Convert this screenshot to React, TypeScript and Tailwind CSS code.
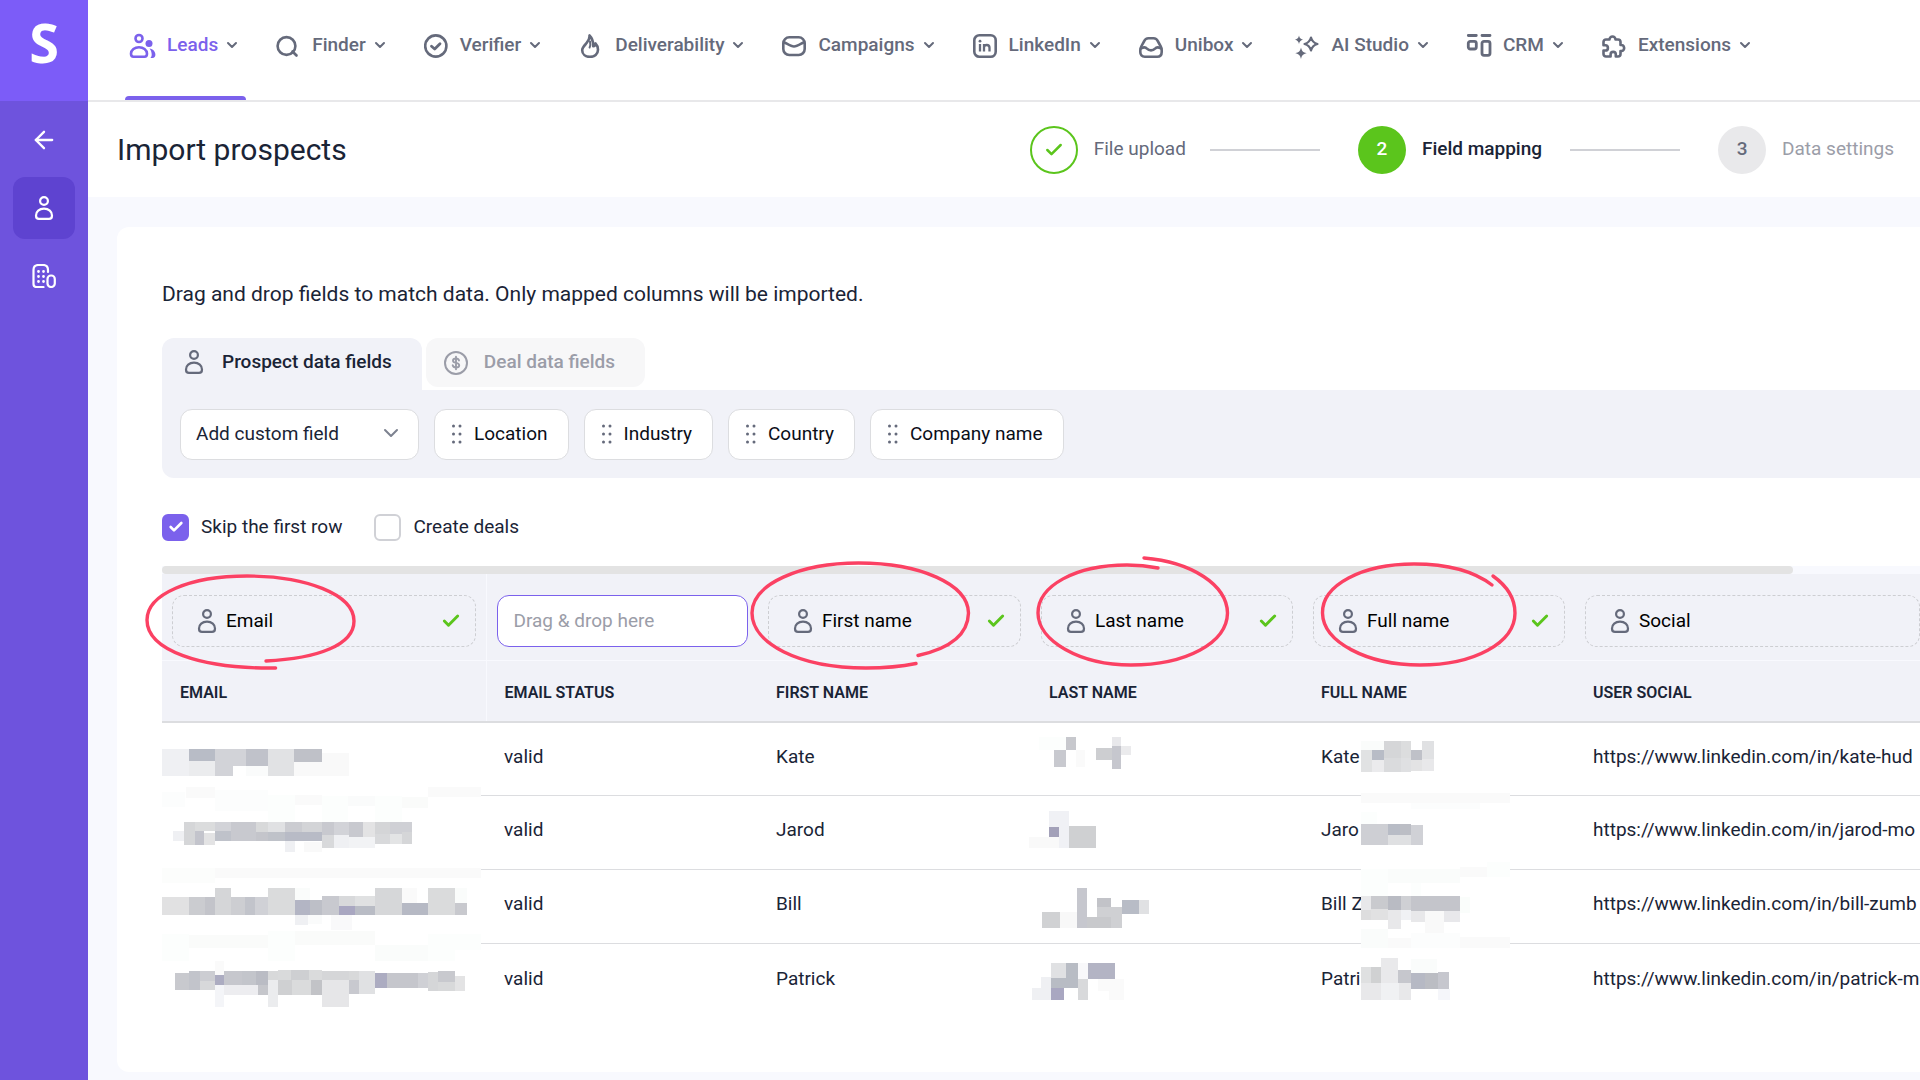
import React from "react";
import { ArrowLeft, Check, ChevronDown } from "lucide-react";

type IconProps = { className?: string };

const strokeProps = {
  fill: "none",
  stroke: "currentColor",
  strokeWidth: 2.6,
  strokeLinecap: "round" as const,
  strokeLinejoin: "round" as const,
};

function PersonIcon({ className = "size-6" }: IconProps) {
  return (
    <svg viewBox="0 0 24 24" className={className} {...strokeProps} strokeWidth={2.2}>
      <circle cx="12" cy="5" r="3.9" />
      <path d="M12 12.6c-4.8 0-8 3-8 6.8 0 2.2 1 3.500 3 3.500h10c2 0 3-1.300 3-3.500 0-3.800-3.200-6.800-8-6.800z" />
    </svg>
  );
}

function BuildingIcon({ className = "size-6" }: IconProps) {
  return (
    <svg viewBox="0 0 24 24" className={className} {...strokeProps} strokeWidth={2.2}>
      <path d="M11.500 23H4.500C2.500 23 1.500 22 1.500 20V6c0-3 2-5 5-5h4.500c3 0 5 2 5 5v2" />
      <rect x="15.500" y="11.500" width="7.300" height="11.500" rx="3.500" />
      <path d="M6.500 7.500h.01M11.500 7.500h.01M6.500 12.500h.01M11.500 12.500h.01M6.500 17.500h.01M11.500 17.500h.01" strokeWidth={2.800} />
    </svg>
  );
}

function LeadsIcon() {
  return (
    <svg viewBox="0 0 24 24" className="size-6 overflow-visible" {...strokeProps}>
      <circle cx="8" cy="4.500" r="3.500" />
      <path d="M8 13.200c-4.200 0-8 2.600-8 6.600C0 21.600.8 22.700 2.500 22.700h11c1.700 0 2.500-1.100 2.500-2.900 0-4-3.800-6.600-8-6.600z" />
      <circle cx="18" cy="9.500" r="3.500" fill="currentColor" stroke="none" />
      <path d="M18.500 14.500c3.400.5 5.900 3 5.900 6.300 0 1.900-1 3.200-3 3.200h-2c.9-.8 1.300-2 1.300-3.400 0-2.300-.8-4.400-2.200-6.100z" fill="currentColor" stroke="none" />
    </svg>
  );
}

function FinderIcon() {
  return (
    <svg viewBox="0 0 24 24" className="size-6" {...strokeProps}>
      <circle cx="10.500" cy="12" r="8.900" />
      <path d="M16.500 17.500l4 4" />
    </svg>
  );
}

function VerifierIcon() {
  return (
    <svg viewBox="0 0 24 24" className="size-6" {...strokeProps}>
      <circle cx="11.800" cy="12" r="10.600" />
      <path d="M7.500 12.200l3.200 2.800 5.300-5.300" strokeWidth={2.800} />
    </svg>
  );
}

function FlameIcon() {
  return (
    <svg viewBox="0 0 24 24" className="size-6" {...strokeProps}>
      <path d="M10.500 1.500c.3 3.500-1 5.500-3 7.700-2 2.200-4.300 4.300-4.300 7 0 4 3.300 6.700 7.800 6.700s8-2.900 8-7.200c0-2.800-1-4.700-2.500-6.200-.2 1.500-1 2.500-2.300 2.700.2-4.200-1-7.900-3.700-10.700z" />
      <path d="M11 7.500c.6 2.500.4 4.500-.4 6" strokeWidth={2} />
    </svg>
  );
}

function MailIcon() {
  return (
    <svg viewBox="0 0 24 24" className="size-6" {...strokeProps}>
      <rect x="1.300" y="3.300" width="21.400" height="17.700" rx="6" />
      <path d="M2.500 8.500c3 1.500 6.500 4 9.500 4s6.500-2.500 9.500-4" />
    </svg>
  );
}

function LinkedInIcon() {
  return (
    <svg viewBox="0 0 24 24" className="size-6" {...strokeProps}>
      <rect x="1.300" y="1.300" width="21.400" height="21.400" rx="5" />
      <path d="M7 10V17.500M11 17.500V10M11 13.500c0-1.700 1-2.500 2.800-2.500s2.700 1 2.700 2.700v3.800" strokeWidth={2.300} strokeLinecap="butt" />
      <circle cx="7" cy="7.200" r="1.400" fill="currentColor" stroke="none" />
    </svg>
  );
}

function InboxIcon() {
  return (
    <svg viewBox="0 0 24 24" className="size-6" {...strokeProps}>
      <path d="M5 7.500C6 5.200 7.500 4.300 9.500 4.300h5c2 0 3.500.9 4.500 3.200l2.500 4.500c.8 1.500 1.200 2.500 1.200 4v2c0 3-1.500 4.700-4.500 4.700H5.800c-3 0-4.500-1.700-4.500-4.700v-2c0-1.500.4-2.500 1.200-4z" />
      <path d="M2 14.500c2.500-1.500 4.500-1.700 6 .2 2 2.200 6 2.200 8 0 1.500-1.900 3.500-1.700 6-.2" />
    </svg>
  );
}

function SparklesIcon() {
  return (
    <svg viewBox="0 0 24 24" className="size-6 overflow-visible" fill="currentColor">
      <path d="M16 3.500c1 4 2.500 5.500 6.500 6.500-4 1-5.500 2.500-6.500 6.500-1-4-2.500-5.500-6.500-6.500 4-1 5.500-2.500 6.500-6.500z" fill="none" stroke="currentColor" strokeWidth="2.200" strokeLinejoin="round" />
      <path d="M4 1.500c.6 2.600 1.500 3.500 4 4.200C5.500 6.400 4.600 7.300 4 9.900 3.400 7.300 2.500 6.400 0 5.700 2.500 5 3.400 4.100 4 1.500z" />
      <path d="M6 13.500c.9 3.700 2 4.800 5.700 5.700C8 20.100 6.900 21.200 6 24.900 5.100 21.200 4 20.100.3 19.200 4 18.300 5.100 17.200 6 13.500z" />
    </svg>
  );
}

function CrmIcon() {
  return (
    <svg viewBox="0 0 24 24" className="size-6 overflow-visible" {...strokeProps} strokeWidth={2.800}>
      <path d="M1.300 1.500h8M15 1.500h8" />
      <rect x="1.300" y="7.300" width="8" height="7.700" rx="2" />
      <rect x="15" y="7.300" width="8" height="14" rx="2" />
    </svg>
  );
}

function PuzzleIcon() {
  return (
    <svg viewBox="0 0 24 24" className="size-6" {...strokeProps}>
      <path d="M7.500 5.500a3 3 0 0 1 6 0H16a2.500 2.500 0 0 1 2.500 2.500v3a3 3 0 0 1 1.200 6h-1.200v3a2.500 2.500 0 0 1-2.500 2.500h-2.200v-2a2.600 2.600 0 0 0-5.200 0v2H4A2.500 2.500 0 0 1 1.500 20v-3.500h1.800a2.600 2.600 0 0 0 0-5.200H1.500V8A2.500 2.500 0 0 1 4 5.500z" />
    </svg>
  );
}

function DollarIcon() {
  return (
    <svg viewBox="0 0 24 24" className="size-6" {...strokeProps} strokeWidth={2}>
      <circle cx="12" cy="12" r="11" />
      <path d="M15 9.500c-.3-1.300-1.400-2-3-2s-3 .8-3 2.200c0 3 6.200 1.400 6.200 4.500 0 1.500-1.300 2.300-3.200 2.300s-3-.8-3.300-2.200M12 5.800v12.400" strokeWidth={1.900} />
    </svg>
  );
}

function GripDots() {
  return (
    <svg viewBox="0 0 10 20" className="h-5 w-2.5" fill="#656a7b">
      <circle cx="1.500" cy="2" r="1.500" />
      <circle cx="8" cy="2" r="1.500" />
      <circle cx="1.500" cy="10" r="1.500" />
      <circle cx="8" cy="10" r="1.500" />
      <circle cx="1.500" cy="18" r="1.500" />
      <circle cx="8" cy="18" r="1.500" />
    </svg>
  );
}

const navItems = [
  { label: "Leads", Icon: LeadsIcon, active: true },
  { label: "Finder", Icon: FinderIcon },
  { label: "Verifier", Icon: VerifierIcon },
  { label: "Deliverability", Icon: FlameIcon },
  { label: "Campaigns", Icon: MailIcon },
  { label: "LinkedIn", Icon: LinkedInIcon },
  { label: "Unibox", Icon: InboxIcon },
  { label: "AI Studio", Icon: SparklesIcon, spaced: true },
  { label: "CRM", Icon: CrmIcon },
  { label: "Extensions", Icon: PuzzleIcon },
];

const chips = ["Location", "Industry", "Country", "Company name"];

const columns = [
  { title: "Email", field: "Email", mapped: true },
  { title: "Email status", field: null, mapped: false },
  { title: "First name", field: "First name", mapped: true },
  { title: "Last name", field: "Last name", mapped: true },
  { title: "Full name", field: "Full name", mapped: true },
  { title: "User social", field: "Social", mapped: false },
];

const rows = [
  { status: "valid", first: "Kate", full: "Kate", social: "https://www.linkedin.com/in/kate-hud" },
  { status: "valid", first: "Jarod", full: "Jaro", social: "https://www.linkedin.com/in/jarod-mo" },
  { status: "valid", first: "Bill", full: "Bill Z", social: "https://www.linkedin.com/in/bill-zumb" },
  { status: "valid", first: "Patrick", full: "Patri", social: "https://www.linkedin.com/in/patrick-m" },
];

// x, y, width, height, fill
type Block = [number, number, number, number, string];

const emailBlocks: Block[] = [
  [66, 117, 81, 81, "#eff0f3"], [147, 117, 78, 36, "#b8bcc6"], [147, 153, 78, 45, "#ebecee"],
  [225, 117, 93, 51, "#d2d3d8"], [225, 168, 54, 30, "#d2d3d8"], [318, 117, 66, 51, "#c0c2ca"],
  [318, 168, 66, 30, "#fafbfb"], [384, 117, 78, 81, "#e1e2e4"], [462, 117, 84, 39, "#bfc1c8"],
  [462, 156, 84, 42, "#f9f9f9"], [546, 129, 81, 69, "#f9f9f9"],
  [66, 247, 70, 44, "#fcfdfd"], [138, 231, 87, 33, "#fafafa"], [225, 240, 159, 64, "#fcfdfd"],
  [384, 256, 81, 80, "#fcfefd"], [465, 255, 81, 30, "#fafafa"], [546, 258, 78, 78, "#fcfefd"],
  [624, 258, 80, 30, "#fafbfb"], [705, 258, 81, 78, "#fcfefd"], [786, 260, 78, 33, "#fafbfa"],
  [864, 231, 159, 30, "#fafafa"],
  [99, 363, 33, 30, "#eff0f3"], [132, 336, 33, 69, "#d5d6d8"], [165, 336, 60, 27, "#dbdcdd"],
  [165, 363, 27, 42, "#c3c4cc"], [192, 369, 33, 36, "#e3e3e4"], [225, 336, 48, 27, "#d2d3d8"],
  [225, 363, 48, 30, "#bfc2ca"], [273, 336, 75, 57, "#c8c9cf"], [348, 336, 36, 30, "#d8d9da"],
  [348, 366, 36, 27, "#c4c5cb"], [384, 336, 51, 30, "#e0e1e3"], [384, 366, 51, 27, "#bfc2c9"],
  [435, 336, 51, 30, "#cbccd1"], [486, 336, 60, 30, "#d3d4d7"], [435, 366, 111, 27, "#b8bbc6"],
  [435, 393, 30, 33, "#eff0f3"], [491, 396, 55, 30, "#f9f9f9"], [546, 336, 36, 40, "#c8c9cf"],
  [546, 376, 36, 38, "#d8d9db"], [582, 336, 45, 39, "#d2d3d8"], [582, 375, 45, 39, "#eff0f3"],
  [627, 336, 42, 45, "#c8c9cf"], [669, 336, 36, 45, "#e3e3e4"], [627, 381, 78, 33, "#f2f3f5"],
  [705, 336, 45, 36, "#d4d5d7"], [705, 372, 45, 30, "#d8d9db"], [750, 336, 66, 36, "#cfd0d5"],
  [750, 372, 36, 30, "#e3e4e5"], [786, 366, 30, 36, "#d5d6d8"],
  [66, 474, 159, 46, "#fcfdfc"], [225, 474, 798, 29, "#fafafa"],
  [66, 561, 81, 54, "#e1e1e2"], [147, 561, 48, 54, "#cbccd0"], [195, 561, 30, 54, "#c3c4ca"],
  [225, 534, 48, 81, "#d5d6d8"], [273, 561, 42, 54, "#cdced2"], [315, 561, 30, 54, "#c2c4cb"],
  [345, 561, 39, 54, "#d0d1d6"], [384, 534, 81, 81, "#dadbdc"], [465, 534, 46, 36, "#fafcfb"],
  [465, 570, 45, 45, "#b3b5c4"], [510, 570, 36, 45, "#bdbfc7"], [465, 615, 39, 30, "#eff0f3"],
  [504, 615, 42, 28, "#fafbfb"], [546, 558, 51, 57, "#c8c9cf"], [597, 558, 48, 30, "#d8d9db"],
  [645, 558, 60, 30, "#e0e1e2"], [597, 588, 48, 27, "#a9a7c1"], [645, 588, 60, 27, "#b9bcc5"],
  [574, 615, 62, 46, "#f9f9fa"], [705, 534, 81, 81, "#d6d7d9"], [786, 534, 45, 45, "#fafafa"],
  [786, 579, 78, 36, "#b6b9c4"], [864, 534, 81, 81, "#dadbdc"], [945, 534, 36, 45, "#fafcfb"],
  [945, 579, 36, 36, "#c8c9ce"],
  [66, 672, 81, 80, "#fcfefd"], [147, 675, 237, 38, "#fafbfa"], [384, 664, 81, 88, "#fcfefd"],
  [465, 664, 240, 40, "#fafbfa"], [705, 704, 159, 48, "#fafcfb"], [864, 672, 81, 80, "#fcfefd"],
  [945, 672, 78, 48, "#fcfefd"],
  [105, 789, 42, 51, "#c8c9ce"], [147, 783, 33, 57, "#c2c4cb"], [180, 783, 45, 30, "#cccdd2"],
  [180, 813, 45, 27, "#d7d8da"], [225, 753, 27, 42, "#fafafa"], [225, 795, 27, 30, "#acacc1"],
  [225, 825, 27, 66, "#f4f5f8"], [252, 783, 54, 42, "#c6c7cd"], [306, 783, 42, 42, "#c3c5cb"],
  [348, 783, 36, 42, "#babcc4"], [252, 825, 102, 30, "#ededf0"], [354, 825, 30, 30, "#c5c6cb"],
  [384, 783, 30, 27, "#d8d9da"], [384, 810, 30, 81, "#ebecee"], [414, 780, 39, 30, "#d9dadb"],
  [453, 780, 54, 30, "#cecfd2"], [507, 780, 39, 30, "#dadbdc"], [414, 810, 42, 45, "#cfd0d2"],
  [456, 810, 57, 45, "#dadbdc"], [513, 810, 33, 45, "#c2c3c7"], [546, 783, 81, 27, "#d5d6d8"],
  [546, 810, 81, 81, "#e6e6e8"], [627, 783, 29, 27, "#d8d9da"], [627, 810, 51, 42, "#c8c9cf"],
  [656, 783, 49, 69, "#e0e1e3"], [705, 789, 36, 45, "#acacc1"], [741, 789, 93, 45, "#c5c6cc"],
  [834, 789, 30, 45, "#cfd0d5"], [864, 786, 30, 57, "#d5d6d8"], [894, 783, 51, 33, "#c8c9ce"],
  [894, 816, 51, 27, "#d8d9da"], [945, 798, 30, 45, "#e3e3e4"],
];

const nameBlocks: Block[] = [
  [165, 81, 76, 39, "#fcfefd"], [241, 81, 28, 39, "#c7c8cd"], [207, 120, 34, 51, "#c8c9cf"],
  [269, 120, 25, 51, "#fafafa"], [325, 114, 45, 36, "#cdced1"], [370, 81, 25, 27, "#e8e8eb"],
  [370, 108, 25, 69, "#c6c7ce"], [395, 108, 28, 27, "#ebebed"],
  [193, 303, 56, 111, "#f0f1f5"], [193, 351, 28, 30, "#a3a1b9"], [137, 381, 84, 33, "#f9f9f9"],
  [249, 348, 76, 66, "#cfd0d2"],
  [174, 606, 50, 48, "#d0d1d3"], [224, 606, 48, 48, "#f8f8f8"], [272, 534, 28, 120, "#c6c7ce"],
  [300, 621, 67, 33, "#c8c9cc"], [328, 564, 39, 27, "#c2c3c8"], [328, 591, 70, 30, "#cfd0d3"],
  [367, 621, 31, 33, "#cfd0d3"], [398, 570, 47, 42, "#b8bcc6"], [445, 570, 28, 42, "#e0e1e3"],
  [199, 759, 42, 45, "#e0e1e3"], [241, 759, 33, 75, "#b8bcc4"], [199, 804, 42, 30, "#b8bcc4"],
  [171, 801, 28, 33, "#eff0f3"], [146, 834, 53, 36, "#eff0f3"], [199, 834, 36, 36, "#a9a7c1"],
  [274, 759, 28, 48, "#f8f8fa"], [302, 759, 76, 48, "#b3b4c4"], [274, 807, 28, 63, "#d8d9db"],
  [330, 807, 73, 36, "#fafafa"], [361, 843, 42, 27, "#fafafa"],
  [1067, 93, 64, 27, "#fafcfb"], [1067, 120, 31, 66, "#e1e2e3"], [1098, 120, 33, 30, "#b8bcc6"],
  [1098, 150, 33, 36, "#ebebed"], [1131, 93, 48, 51, "#d5d6d8"], [1131, 144, 48, 42, "#dadbdd"],
  [1179, 93, 28, 51, "#dcddde"], [1179, 144, 28, 42, "#dfe0e2"], [1207, 120, 31, 30, "#bfc1c8"],
  [1207, 150, 31, 33, "#e3e3e4"], [1238, 93, 33, 54, "#e0e1e3"], [1238, 147, 33, 36, "#e8e8ea"],
  [1067, 249, 417, 29, "#fafafa"], [1207, 278, 193, 20, "#fcfdfd"], [1067, 305, 46, 37, "#fcfefd"],
  [1067, 342, 75, 63, "#cecfd4"], [1142, 342, 33, 33, "#b8bcc6"], [1175, 342, 32, 33, "#bcbec5"],
  [1142, 375, 65, 30, "#dfe0e2"], [1207, 345, 33, 60, "#d0d1d6"],
  [1067, 478, 75, 80, "#fcfefd"], [1142, 478, 202, 40, "#fafcfb"], [1207, 518, 28, 40, "#fcfefd"],
  [1344, 471, 76, 29, "#fafafa"], [1420, 457, 64, 43, "#fcfefd"],
  [1067, 558, 28, 42, "#e8e8ea"], [1095, 558, 47, 39, "#c9cace"], [1142, 558, 37, 42, "#b9bbc3"],
  [1179, 558, 28, 42, "#cfd0d4"], [1207, 558, 137, 45, "#c4c5cb"], [1067, 600, 28, 30, "#ddddde"],
  [1095, 597, 47, 33, "#e1e1e2"], [1142, 600, 37, 57, "#e8e8ea"], [1179, 600, 28, 30, "#f0f1f4"],
  [1207, 603, 39, 33, "#e8e8ea"], [1246, 603, 53, 66, "#f9f9f9"], [1299, 603, 45, 33, "#e8e8eb"],
  [1344, 560, 28, 48, "#fafdfb"],
  [1067, 656, 75, 58, "#fafcfb"], [1142, 684, 65, 30, "#fafafa"], [1207, 669, 137, 45, "#fcfdfd"],
  [1344, 680, 140, 34, "#fafafa"],
  [1067, 771, 28, 48, "#dfe0e1"], [1095, 771, 28, 48, "#d0d1d2"], [1123, 744, 47, 75, "#e9e9eb"],
  [1170, 780, 37, 39, "#c6c7cd"], [1067, 819, 56, 51, "#e8e8ea"], [1123, 819, 50, 51, "#f0f1f3"],
  [1173, 819, 34, 51, "#e8e8ea"], [1207, 747, 74, 42, "#fafcfb"], [1207, 789, 39, 48, "#b6b9c4"],
  [1246, 789, 36, 48, "#bbbdc3"], [1282, 786, 31, 51, "#c6c7ce"], [1282, 837, 34, 33, "#f5f6fa"],
];

function Mosaic({ blocks, transform }: { blocks: Block[]; transform: string }) {
  return (
    <g transform={transform} shapeRendering="crispEdges">
      {blocks.map(([x, y, w, h, fill]) => (
        <rect key={`${x}-${y}`} x={x} y={y} width={w} height={h} fill={fill} />
      ))}
    </g>
  );
}

// Redacted values and the hand-drawn marks over the mapped columns
function Annotations() {
  return (
    <svg
      viewBox="140 550 1780 500"
      className="pointer-events-none absolute -top-4 -left-[22px] h-[500px] w-[1780px] overflow-visible"
      aria-hidden="true"
    >
      <g fill="#fff">
        <rect x="162" y="780" width="319" height="180" />
        <rect x="1361" y="780" width="149" height="180" />
      </g>
      <Mosaic blocks={emailBlocks} transform="translate(140 710) scale(0.3333)" />
      <Mosaic blocks={nameBlocks} transform="translate(980 710) scale(0.3571 0.3333)" />
      <g fill="none" stroke="#fb4163" strokeWidth="3.4" strokeLinecap="round">
        <path d="M275.600 668 C200 669 147 650 147 620 C147 594 190 576 247 576 C305 576 354 594 354 621 C354 645 318 658.500 266 661" />
        <path d="M916 663.500 C899 667 884 668 866 668 C798 668 752 643 752 613 C752 584 800 563 858.600 563 C920 563 968 584 968.500 613 C968 634 952 648 918 655.500" />
        <path d="M1144 558 C1192 562 1227 585 1227.500 613 C1227 643 1186 665 1131 665 C1080 665 1038 641 1038 613 C1038 586 1075 565 1127 565 C1138 565 1148 566 1158 568" />
        <path d="M1492 585 C1475 572 1448 564 1414 564 C1362 564 1322 585 1322.500 613 C1323 642 1367 665 1420 665 C1474 665 1515 643 1515 613 C1515 598 1507 586 1493 576" />
      </g>
    </svg>
  );
}

function Sidebar() {
  return (
    <aside className="flex w-[88px] shrink-0 flex-col bg-[#6e53dd] text-white">
      <a href="#" className="flex h-[101px] items-start justify-center bg-[#7c5cf8] pt-3 font-['Open_Sans',sans-serif] text-[54px] leading-[60px] font-bold">
        S
      </a>
      <nav className="flex flex-col items-center gap-1.5 pt-2">
        <button aria-label="Back" className="flex size-[62px] items-center justify-center">
          <ArrowLeft className="size-7" strokeWidth={2} />
        </button>
        <button aria-label="Prospects" className="flex size-[62px] items-center justify-center rounded-xl bg-[#5e43d0]">
          <PersonIcon />
        </button>
        <button aria-label="Companies" className="flex size-[62px] items-center justify-center">
          <BuildingIcon />
        </button>
      </nav>
    </aside>
  );
}

function TopNav() {
  return (
    <nav className="flex h-[102px] items-stretch gap-6 border-b-2 border-[#e8e8ea] bg-white pl-[37px]">
      {navItems.map(({ label, Icon, active, spaced }) => (
        <button
          key={label}
          className={`relative flex h-[100px] shrink-0 items-start px-1.5 pt-[34px] text-[19px] leading-[22px] font-medium ${
            active ? "text-[#7b61ec]" : "text-[#656a7b]"
          } ${spaced ? "ml-1" : ""}`}
        >
          <Icon />
          <span className="ml-3">{label}</span>
          <ChevronDown className={`mt-[3px] ml-1.5 size-4 ${active ? "text-[#656a7b]" : ""}`} strokeWidth={3} />
          {active && <span className="absolute inset-x-0 bottom-0 h-1 rounded-t bg-[#7b61ec]" />}
        </button>
      ))}
    </nav>
  );
}

function Stepper() {
  return (
    <ol className="flex shrink-0 items-center text-[19px]">
      <li className="flex items-center">
        <span className="flex size-12 items-center justify-center rounded-full border-2 border-[#5bc51c] text-[#5bc51c]">
          <Check className="size-5" strokeWidth={3} />
        </span>
        <span className="ml-4 text-[#656a7b]">File upload</span>
        <span className="ml-6 h-0.5 w-[110px] bg-[#d0d1d6]" />
      </li>
      <li className="ml-[38px] flex items-center">
        <span className="flex size-12 items-center justify-center rounded-full bg-[#5bc51c] font-medium text-white">2</span>
        <span className="ml-4 font-medium text-[#1a2436]">Field mapping</span>
        <span className="ml-7 h-0.5 w-[110px] bg-[#d0d1d6]" />
      </li>
      <li className="ml-[38px] flex items-center">
        <span className="flex size-12 items-center justify-center rounded-full bg-[#e9e9eb] font-medium text-[#656a7b]">3</span>
        <span className="ml-4 text-[#9b9da8]">Data settings</span>
      </li>
    </ol>
  );
}

function FieldPicker() {
  return (
    <div className="mt-[31px]">
      <div role="tablist" className="flex items-start gap-1">
        <button
          role="tab"
          aria-selected="true"
          className="flex h-[52px] items-center gap-4 rounded-t-xl bg-[#f1f2f8] pr-[30px] pb-1 pl-5 text-[19px] font-medium text-[#1a2436]"
        >
          <span className="text-[#656a7b]"><PersonIcon /></span>
          Prospect data fields
        </button>
        <button
          role="tab"
          aria-selected="false"
          className="flex h-[49px] items-center gap-4 rounded-xl bg-[#f7f7f8] pr-[30px] pl-[18px] text-[19px] font-medium text-[#9b9da8]"
        >
          <DollarIcon />
          Deal data fields
        </button>
      </div>
      <div className="flex h-[88px] items-center gap-[15px] rounded-bl-xl bg-[#f1f2f8] pl-[18px]">
        <div className="relative">
          <select
            aria-label="Add custom field"
            className="h-[51px] w-[239px] appearance-none rounded-xl border border-[#dcdde0] bg-white pl-[15px] text-[19px] text-[#1a2436]"
          >
            <option>Add custom field</option>
          </select>
          <ChevronDown className="pointer-events-none absolute top-3 right-4 size-6 text-[#7d8290]" strokeWidth={2} />
        </div>
        {chips.map((chip) => (
          <button
            key={chip}
            className="flex h-[51px] items-center gap-3 rounded-xl border border-[#dcdde0] bg-white pr-5 pl-[17px] text-[19px] text-[#0b0e18]"
          >
            <GripDots />
            {chip}
          </button>
        ))}
      </div>
    </div>
  );
}

function CheckOption({ label, checked }: { label: string; checked?: boolean }) {
  return (
    <label className="flex items-center gap-3 text-[19px] text-[#1a2436]">
      <span className="relative flex size-[27px] items-center justify-center">
        <input
          type="checkbox"
          defaultChecked={checked}
          className="peer size-[27px] appearance-none rounded-md border-2 border-[#d0d1d6] bg-white checked:border-[#7b61ec] checked:bg-[#7b61ec]"
        />
        <Check className="pointer-events-none absolute hidden size-4 text-white peer-checked:block" strokeWidth={4} />
      </span>
      {label}
    </label>
  );
}

function DropZone({ field, mapped }: { field: string | null; mapped: boolean }) {
  if (!field) {
    return (
      <input
        aria-label="Map email status"
        placeholder="Drag & drop here"
        className="block h-[52px] w-full rounded-xl border border-[#7b61ec] bg-white px-4 text-[19px] font-normal placeholder:text-[#9b9da8]"
      />
    );
  }
  return (
    <div className="flex h-[52px] items-center rounded-xl border border-dashed border-[#cdced2] pr-3.5 pl-[22px] text-[19px] font-normal text-black">
      <span className="text-[#656a7b]"><PersonIcon /></span>
      <span className="ml-[7px]">{field}</span>
      {mapped && <Check className="ml-auto size-5 text-[#5bc51c]" strokeWidth={3.500} />}
    </div>
  );
}

function MappingTable() {
  return (
    <div className="relative mt-6">
      <div className="h-2 bg-[#f8f9fe]">
        <div className="h-2 w-[1631px] rounded bg-[#e3e3e3]" />
      </div>
      <table className="w-full table-fixed border-collapse text-left text-[19px] text-[#1a2436]">
        <colgroup>
          <col className="w-[324px]" />
          <col className="w-[272px]" />
          <col className="w-[273px]" />
          <col className="w-[272px]" />
          <col className="w-[272px]" />
          <col />
        </colgroup>
        <thead className="bg-[#f1f2f8]">
          <tr className="border-b border-[#f8f9fe]">
            {columns.map((col, i) => (
              <td
                key={col.title}
                className={`h-[87px] pt-2 pb-0 pl-2.5 ${i === 0 ? "border-r border-[#f8f9fe]" : ""} ${i === columns.length - 1 ? "pr-0" : "pr-2.5"}`}
              >
                <DropZone field={col.field} mapped={col.mapped} />
              </td>
            ))}
          </tr>
          <tr className="border-b-2 border-[#dcdde0]">
            {columns.map((col, i) => (
              <th
                key={col.title}
                className={`h-[61px] pt-1 pl-[18px] text-base font-semibold uppercase ${i === 0 ? "border-r border-[#f8f9fe]" : ""}`}
              >
                {col.title}
              </th>
            ))}
          </tr>
        </thead>
        <tbody>
          {rows.map((row) => (
            <tr key={row.first} className="h-[74px] border-b border-[#dcdde0] last:border-b-0">
              <td />
              <td className="pb-1 pl-[18px]">{row.status}</td>
              <td className="pb-1 pl-[18px]">{row.first}</td>
              <td />
              <td className="pb-1 pl-[18px]">{row.full}</td>
              <td className="overflow-hidden pb-1 pl-[18px] whitespace-nowrap">{row.social}</td>
            </tr>
          ))}
        </tbody>
      </table>
      <Annotations />
    </div>
  );
}

export default function App() {
  return (
    <div className="flex min-h-screen overflow-hidden bg-[#f8f9fe] font-[Roboto,sans-serif] text-[#1a2436]">
      <Sidebar />
      <div className="min-w-0 flex-1">
        <TopNav />
        <header className="flex h-[95px] items-center justify-between bg-white pr-[26px] pl-[29px]">
          <h1 className="text-3xl">Import prospects</h1>
          <Stepper />
        </header>
        <main className="mt-[30px] mb-2 ml-[29px] overflow-hidden rounded-l-xl bg-white pt-[54px] pb-[54px] pl-[45px]">
          <p className="text-[21px] leading-[26px]">Drag and drop fields to match data. Only mapped columns will be imported.</p>
          <FieldPicker />
          <div className="mt-[35px] flex gap-8">
            <CheckOption label="Skip the first row" checked />
            <CheckOption label="Create deals" />
          </div>
          <MappingTable />
        </main>
      </div>
    </div>
  );
}
